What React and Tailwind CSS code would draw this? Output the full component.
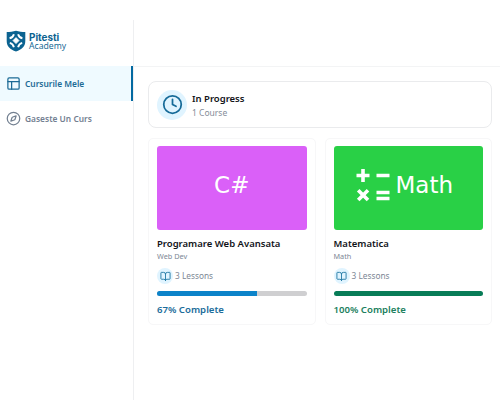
import { BookOpen, Clock, Compass, Layout } from "lucide-react";

const routes = [
  { label: "Cursurile Mele", icon: Layout, active: true },
  { label: "Gaseste Un Curs", icon: Compass, active: false },
];

const courses = [
  { id: 1, title: "Programare Web Avansata", category: "Web Dev", lessons: 3, progress: 67, cover: "csharp" },
  { id: 2, title: "Matematica", category: "Math", lessons: 3, progress: 100, cover: "math" },
];

const Logo = () => {
  return (
    <div className="flex h-[46px] items-center pl-[6px] text-[#0c6391]">
      <svg width="20" height="22" viewBox="0 0 20 22" className="mt-[-5px] shrink-0">
        <path d="M10 .7C13 1.700 16 1.800 19.300 2V11c0 5.400-3.500 8.800-9.300 10.400C4.200 19.800.7 16.400.7 11V2C4 1.800 7 1.700 10 .7Z" fill="currentColor" />
        <path d="M3.600 8.300C5.800 7.800 7.300 6.400 7.900 4.200M16.400 8.300C14.200 7.800 12.700 6.400 12.100 4.200M3.800 12.800C5.800 13.300 7.300 14.800 7.900 17.300M16.200 12.800C14.200 13.300 12.700 14.800 12.100 17.300" fill="none" stroke="#fff" strokeWidth="1.900" />
        <path d="M10 7.600 13 10.600 10 13.600 7 10.600Z" fill="#fff" stroke="#fff" strokeWidth="0.800" strokeLinejoin="round" />
      </svg>
      <div className="ml-[3px] mt-[-4px] font-['Open_Sans',sans-serif]">
        <p className="font-['Inter',sans-serif] text-[9.900px] font-bold leading-[10px]">Pitesti</p>
        <p className="text-[8.700px] leading-[9px]">Academy</p>
      </div>
    </div>
  );
};

const SidebarItem = ({ label, icon: Icon, active }) => {
  return (
    <button
      className={
        active
          ? "flex h-[35px] w-full items-center gap-[5px] border-r-2 border-[#0369a1] bg-[#effaff] pl-[6px] text-[#1d6b96]"
          : "flex h-[35px] w-full items-center gap-[5px] pl-[6px] text-[#738091]"
      }
    >
      <Icon size={15} strokeWidth={2} />
      <span className="ml-[-1px] mt-px whitespace-nowrap text-[8.400px] font-semibold">{label}</span>
    </button>
  );
};

const Cover = ({ type }) => {
  if (type === "math") {
    return (
      <div className="flex h-[84px] items-center rounded-[3px] bg-[#29d046] pl-[22px] text-white">
        <svg width="34" height="34" viewBox="0 0 34 34" className="mt-[-6px]" stroke="currentColor" strokeWidth="3.600" fill="none">
          <path d="M0.500 7.500H13.500M7 1V14M20.500 7.500H33.500M2.200 22.300 12 32.100M12 22.300 2.200 32.100M20.500 24.500H33.500M20.500 30.500H33.500" />
        </svg>
        <span className="ml-[6px] mt-[-5px] font-['DejaVu_Sans',sans-serif] text-[23px] leading-none">Math</span>
      </div>
    );
  }

  return (
    <div className="flex h-[84px] items-center justify-center rounded-[3px] bg-[#da60f8] text-white">
      <span className="mt-[-5px] font-['DejaVu_Sans',sans-serif] text-[23px] leading-none">C#</span>
    </div>
  );
};

const CourseCard = ({ course }) => {
  const done = course.progress === 100;

  return (
    <div className="h-[187px] rounded-[5px] border border-[#f7f7f8] p-2 pt-[7px]">
      <Cover type={course.cover} />
      <p className="mt-[7px] whitespace-nowrap text-[9.500px] font-semibold leading-[14px] text-[#111318]">{course.title}</p>
      <p className="text-[7.300px] leading-[11px] text-[#7d8795]">{course.category}</p>
      <div className="mt-[6px] flex h-4 items-center gap-[2px]">
        <div className="flex size-4 items-center justify-center rounded-full bg-[#e0f4ff] text-[#2279a5]">
          <BookOpen size={11} />
        </div>
        <span className="mt-px text-[8.300px] text-[#7d8795]">{course.lessons} Lessons</span>
      </div>
      <div className="mt-[7px] h-[5px] overflow-hidden rounded-full bg-[#cfcfd1]">
        <div
          className={done ? "h-full bg-[#087c57]" : "h-full bg-[#0c83c9]"}
          style={{ width: `${course.progress}%` }}
        />
      </div>
      <p className={done ? "mt-[7px] text-[9.600px] font-semibold leading-[14px] text-[#217f5e]" : "mt-[7px] text-[9.600px] font-semibold leading-[14px] text-[#1c6d9b]"}>
        {course.progress}% Complete
      </p>
    </div>
  );
};

export default function App() {
  return (
    <div className="h-[400px] w-[500px] overflow-hidden bg-white pt-5 font-['Noto_Sans',sans-serif]">
      <div className="flex h-[380px]">
        <aside className="w-[134px] shrink-0 border-r border-[#eeeff1]">
          <Logo />
          {routes.map((route) => (
            <SidebarItem key={route.label} {...route} />
          ))}
        </aside>
        <div className="flex-1">
          <header className="h-[47px] border-b border-[#f3f4f5]" />
          <main className="pl-[14px] pr-2 pt-[14px]">
            <div className="flex h-[47px] items-center rounded-lg border border-[#eaebed] pl-2">
              <div className="flex size-[30px] items-center justify-center rounded-full bg-[#e0f4ff] text-[#156a98]">
                <Clock size={21} />
              </div>
              <div className="ml-[5px] mt-[3px]">
                <p className="text-[9.500px] font-semibold leading-[14px] text-[#111318]">In Progress</p>
                <p className="text-[8.500px] leading-[14px] text-[#858d99]">1 Course</p>
              </div>
            </div>
            <div className="mt-[10px] grid grid-cols-2 gap-[9px]">
              {courses.map((course) => (
                <CourseCard key={course.id} course={course} />
              ))}
            </div>
          </main>
        </div>
      </div>
    </div>
  );
}
